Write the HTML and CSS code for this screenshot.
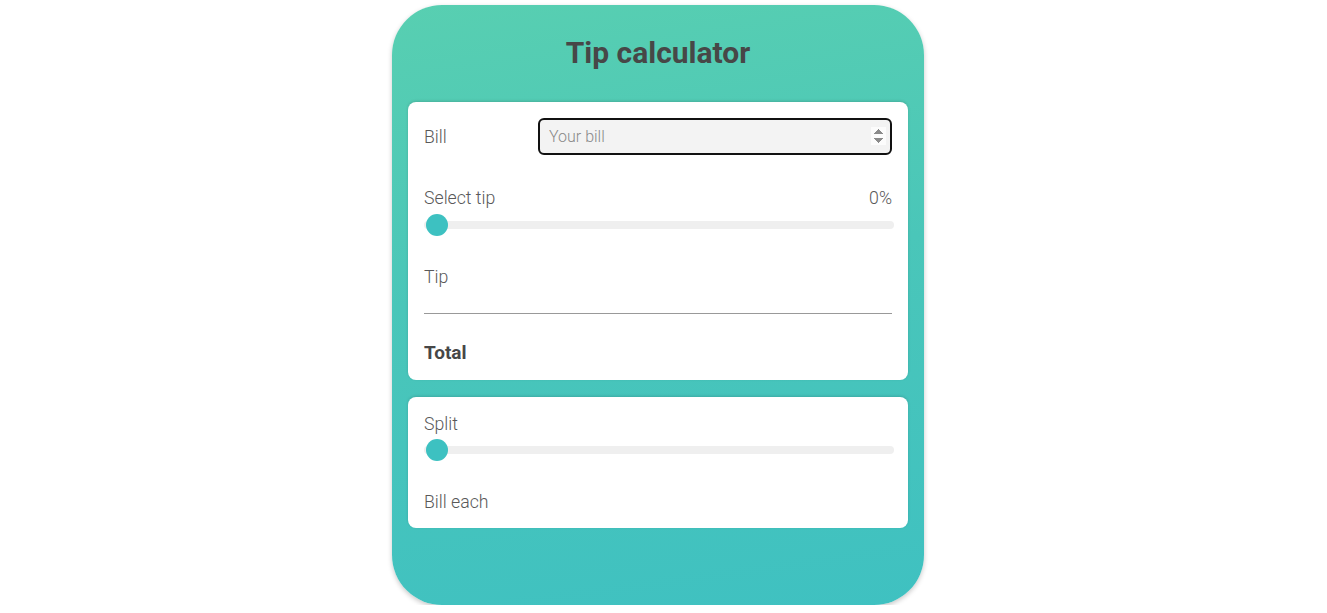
FILE: index.html
```html
<!DOCTYPE html>
<html lang="en">
<head>
<meta charset="utf-8">
<title>Tip calculator</title>
<link rel="stylesheet" href="styles.css">
</head>
<body>
<div class="page">
  <main class="calc">
    <h1 class="title">Tip calculator</h1>
    <section class="card card-main">
      <div class="bill-row">
        <label class="label" for="bill">Bill</label>
        <input class="bill-input" id="bill" type="number" placeholder="Your bill">
      </div>
      <div class="row-between tip-head">
        <span class="label">Select tip</span>
        <span class="label">0%</span>
      </div>
      <input class="range" type="range" min="0" max="30" value="0">
      <div class="label tip-label">Tip</div>
      <hr class="divider">
      <div class="total">Total</div>
    </section>
    <section class="card card-split">
      <div class="label">Split</div>
      <input class="range range-split" type="range" min="1" max="10" value="1">
      <div class="label each-label">Bill each</div>
    </section>
  </main>
</div>
</body>
</html>
```
FILE: styles.css
```css
* { box-sizing: border-box; }
html, body { margin: 0; padding: 0; background: #fff; }
body { font-family: Roboto, "Liberation Sans", sans-serif; color: #555; }

.page {
  display: flex;
  justify-content: center;
  padding: 5px 11px 0 0;
}

.calc {
  width: 532px;
  height: 600px;
  border-radius: 50px;
  padding: 30px 16px 0;
  background: linear-gradient(172deg, #58cfb1 0%, #4ac6b9 45%, #3fc1c1 100%);
  box-shadow: 0 2px 5px rgba(0, 0, 0, 0.22);
}

.title {
  margin: 0 0 31px;
  text-align: center;
  font-size: 30px;
  line-height: 36px;
  font-weight: 700;
  color: #474747;
}

.card {
  background: #fff;
  border-radius: 8px;
  box-shadow: 0 -1px 3px rgba(0, 0, 0, 0.14);
  padding: 16px 16px 16px;
  display: flex;
  flex-direction: column;
}

.card-split { margin-top: 17px; padding-bottom: 15px; }

.label {
  font-size: 17.7px;
  line-height: 22px;
  font-weight: 300;
  color: #595959;
}

.bill-row {
  display: flex;
  align-items: center;
}
.bill-row .label { width: 114px; flex: none; }

.bill-input {
  flex: 1;
  height: 37px;
  border: 2px solid #111;
  border-radius: 6px;
  background: #f3f3f3;
  padding: 0 4px 0 9px;
  font-family: Roboto, "Liberation Sans", sans-serif;
  font-size: 16px;
  font-weight: 300;
  color: #555;
  outline: none;
}
.bill-input::placeholder { color: #8a8a8a; }
.bill-input::-webkit-inner-spin-button,
.bill-input::-webkit-outer-spin-button { opacity: 1; }

.row-between {
  display: flex;
  justify-content: space-between;
}
.tip-head { margin-top: 32px; }

.range {
  -webkit-appearance: none;
  appearance: none;
  width: calc(100% + 2px);
  height: 22px;
  margin: 5px 0 0;
  background: transparent;
}
.range-split { margin-top: 4px; }
.range::-webkit-slider-runnable-track {
  height: 8px;
  border-radius: 4px;
  background: #efefef;
}
.range::-webkit-slider-thumb {
  -webkit-appearance: none;
  appearance: none;
  width: 22px;
  height: 22px;
  border-radius: 50%;
  background: #3dc1c1;
  border: none;
  margin-top: -7px;
  margin-left: 2px;
}

.tip-label { margin-top: 30px; }

.divider {
  margin: 25px 0 0;
  border: 0;
  height: 1px;
  background: #999;
}

.total {
  margin-top: 28px;
  font-size: 19px;
  line-height: 22px;
  font-weight: 700;
  color: #474747;
}

.each-label { margin-top: 30px; }
```
